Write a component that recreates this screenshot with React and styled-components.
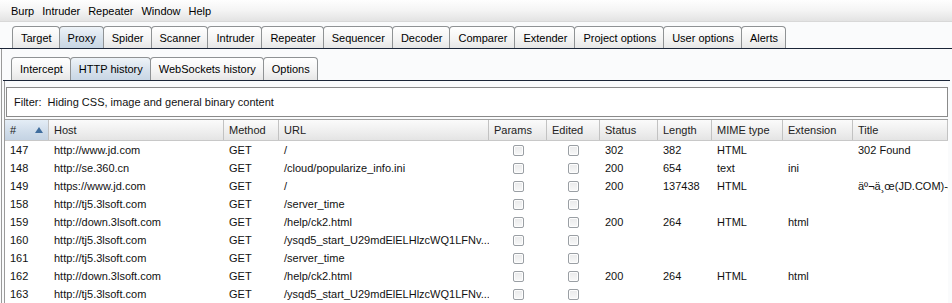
import React from "react";
import styled, { createGlobalStyle } from "styled-components";

const GlobalStyle = createGlobalStyle`
  html, body { margin: 0; padding: 0; background: #fafbfc; }
  body { font-family: "Liberation Sans", Arial, sans-serif; font-size: 11px; color: #000; }
`;

const Window = styled.div`
  width: 952px;
  height: 303px;
  overflow: hidden;
  background: #fafbfc;
  display: flex;
  flex-direction: column;
`;

const MenuBar = styled.div`
  height: 21px;
  display: flex;
  align-items: center;
  padding-left: 7px;
  background: linear-gradient(#fefefe, #f4f4f4 50%, #e3e3e3);
  border-bottom: 1px solid #d8d8d8;
  flex-shrink: 0;
`;

const MenuItem = styled.span`
  padding: 0 4px;
  color: #000;
`;

const TabStrip = styled.div`
  display: flex;
  align-items: flex-end;
  padding-left: ${(p) => p.$indent}px;
  margin-top: ${(p) => p.$top}px;
  height: ${(p) => p.$height}px;
  flex-shrink: 0;
`;

const Tab = styled.div`
  height: calc(100% - 1px);
  display: flex;
  align-items: center;
  padding: 0 7px 0 8px;
  margin-right: -1px;
  border: 1px solid #8f9294;
  border-bottom: none;
  border-radius: 4px 4px 0 0;
  color: #000;
  background: ${(p) =>
    p.$active
      ? "linear-gradient(#eef3f8, #d5e0eb 60%, #c8d6e4)"
      : "linear-gradient(#ffffff, #f3f3f3 60%, #e6e6e6)"};
  white-space: nowrap;
`;

const Panel = styled.div`
  border-top: 1px solid #1b2538;
  display: flex;
  flex-direction: column;
  flex: 1;
  min-height: 0;
`;

const Content = styled.div`
  border-left: 1px solid #9a9a9a;
  margin-left: ${(p) => p.$inset}px;
  padding: ${(p) => p.$padTop}px 2px 0 1px;
  display: flex;
  flex-direction: column;
  flex: 1;
  min-height: 0;
`;

const FilterBox = styled.div`
  height: 28px;
  border: 1px solid #8a8a8a;
  background: #fff;
  display: flex;
  align-items: center;
  padding-left: 7px;
  flex-shrink: 0;
  color: #111;
`;

const Table = styled.div`
  margin-top: 2px;
  margin-left: -1px;
  border-top: 1px solid #a0a0a0;
  background: #fff;
  flex: 1;
`;

const cols = "44px 175px 55px 210px 58px 53px 58px 54px 71px 70px 1fr";

const HeaderRow = styled.div`
  display: grid;
  grid-template-columns: ${cols};
  height: 20px;
  background: linear-gradient(#fbfbfb, #eeeeee 60%, #e4e4e4);
  border-bottom: 1px solid #c8c8c8;
`;

const HeaderCell = styled.div`
  display: flex;
  align-items: center;
  justify-content: space-between;
  padding: 0 5px;
  border-right: 1px solid #c2c2c2;
  color: #222;
  background: ${(p) =>
    p.$sorted ? "linear-gradient(#e4edf6, #cfdcea 60%, #c4d3e3)" : "transparent"};
`;

const SortArrow = styled.span`
  width: 0;
  height: 0;
  border-left: 4px solid transparent;
  border-right: 4px solid transparent;
  border-bottom: 6px solid #3f6d9e;
`;

const Row = styled.div`
  display: grid;
  grid-template-columns: ${cols};
  height: 18px;
`;

const Cell = styled.div`
  display: flex;
  align-items: center;
  justify-content: ${(p) => (p.$center ? "center" : "flex-start")};
  padding: 0 5px;
  white-space: nowrap;
  overflow: hidden;
  color: #111;
`;

const Check = styled.span`
  width: 9px;
  height: 9px;
  border: 1px solid #9a9fa4;
  border-radius: 2px;
  background: linear-gradient(#e9eaeb, #f8f8f8);
  box-shadow: inset 0 0 0 1px #fdfdfd;
`;

const topTabs = [
  "Target", "Proxy", "Spider", "Scanner", "Intruder", "Repeater", "Sequencer",
  "Decoder", "Comparer", "Extender", "Project options", "User options", "Alerts",
];
const subTabs = ["Intercept", "HTTP history", "WebSockets history", "Options"];
const headers = ["#", "Host", "Method", "URL", "Params", "Edited", "Status", "Length", "MIME type", "Extension", "Title"];

const rows = [
  ["147", "http://www.jd.com", "GET", "/", "302", "382", "HTML", "", "302 Found"],
  ["148", "http://se.360.cn", "GET", "/cloud/popularize_info.ini", "200", "654", "text", "ini", ""],
  ["149", "https://www.jd.com", "GET", "/", "200", "137438", "HTML", "", "äº¬ä¸œ(JD.COM)-æ­£"],
  ["158", "http://tj5.3lsoft.com", "GET", "/server_time", "", "", "", "", ""],
  ["159", "http://down.3lsoft.com", "GET", "/help/ck2.html", "200", "264", "HTML", "html", ""],
  ["160", "http://tj5.3lsoft.com", "GET", "/ysqd5_start_U29mdElELHlzcWQ1LFNv...", "", "", "", "", ""],
  ["161", "http://tj5.3lsoft.com", "GET", "/server_time", "", "", "", "", ""],
  ["162", "http://down.3lsoft.com", "GET", "/help/ck2.html", "200", "264", "HTML", "html", ""],
  ["163", "http://tj5.3lsoft.com", "GET", "/ysqd5_start_U29mdElELHlzcWQ1LFNv...", "", "", "", "", ""],
];

export default function App() {
  return (
    <>
      <GlobalStyle />
      <Window>
        <MenuBar>
          {["Burp", "Intruder", "Repeater", "Window", "Help"].map((m) => (
            <MenuItem key={m}>{m}</MenuItem>
          ))}
        </MenuBar>
        <TabStrip $indent={12} $top={4} $height={22}>
          {topTabs.map((t) => (
            <Tab key={t} $active={t === "Proxy"}>{t}</Tab>
          ))}
        </TabStrip>
        <Panel>
          <Content $inset={1} $padTop={0}>
            <TabStrip $indent={8} $top={8} $height={23}>
              {subTabs.map((t) => (
                <Tab key={t} $active={t === "HTTP history"}>{t}</Tab>
              ))}
            </TabStrip>
            <Panel>
              <Content $inset={1} $padTop={6}>
                <FilterBox>Filter:&nbsp; Hiding CSS, image and general binary content</FilterBox>
                <Table>
                  <HeaderRow>
                    {headers.map((h) => (
                      <HeaderCell key={h} $sorted={h === "#"}>
                        {h}
                        {h === "#" && <SortArrow />}
                      </HeaderCell>
                    ))}
                  </HeaderRow>
                  {rows.map((r) => (
                    <Row key={r[0]}>
                      <Cell>{r[0]}</Cell>
                      <Cell>{r[1]}</Cell>
                      <Cell>{r[2]}</Cell>
                      <Cell>{r[3]}</Cell>
                      <Cell $center><Check /></Cell>
                      <Cell $center><Check /></Cell>
                      <Cell>{r[4]}</Cell>
                      <Cell>{r[5]}</Cell>
                      <Cell>{r[6]}</Cell>
                      <Cell>{r[7]}</Cell>
                      <Cell>{r[8]}</Cell>
                    </Row>
                  ))}
                </Table>
              </Content>
            </Panel>
          </Content>
        </Panel>
      </Window>
    </>
  );
}
